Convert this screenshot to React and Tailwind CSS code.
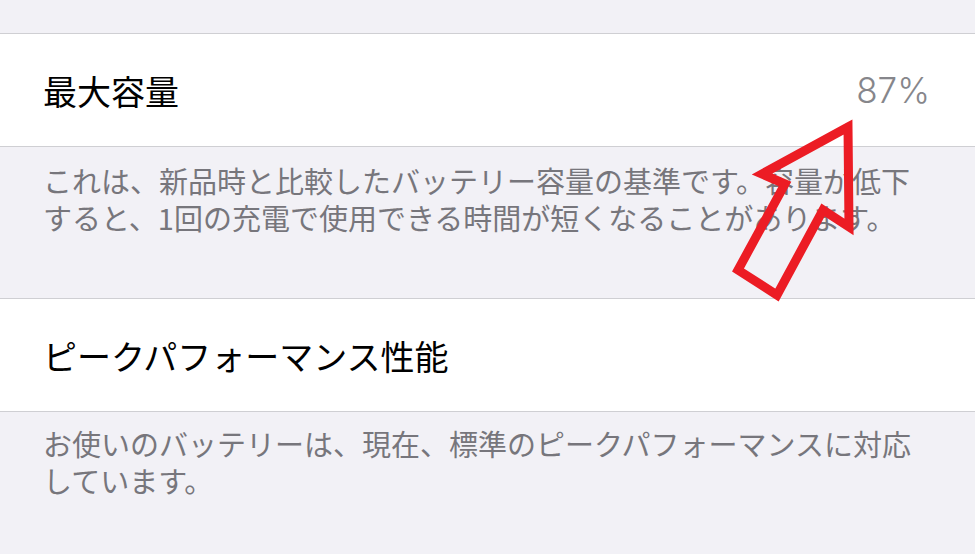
import React from 'react';

const jp = { fontFamily: '"Noto Sans CJK JP", "Noto Sans", sans-serif' };

function Row({ title, value }) {
  return (
    <div className="flex h-[112px] items-center justify-between bg-white pl-[43px] pr-[45px]">
      <span className="text-[34px] text-black" style={jp}>{title}</span>
      {value && (
        <span className="text-[35px] font-light text-[#86868b]" style={{ fontFamily: 'Inter, "Liberation Sans", sans-serif' }}>
          {value}
        </span>
      )}
    </div>
  );
}

function Note({ children, className }) {
  return (
    <div className={`px-[43px] text-[29px] leading-[37px] text-[#77767c] ${className}`} style={jp}>
      {children}
    </div>
  );
}

// 赤い矢印(注釈)
function Arrow() {
  return (
    <svg className="pointer-events-none absolute inset-0" width="975" height="554" viewBox="0 0 975 554">
      <polygon
        points="848,127 762,174 785,184 738,270 777,295 823,210 849,227"
        fill="none"
        stroke="#ec1c24"
        strokeWidth="9"
        strokeLinejoin="miter"
      />
    </svg>
  );
}

export default function App() {
  return (
    <div className="relative h-[554px] w-[975px] overflow-hidden bg-[#f2f1f6]">
      <div className="h-[33px]" />
      <div className="border-y border-[#cfcfd3]">
        <Row title="最大容量" value="87%" />
      </div>
      <Note className="h-[151px] pt-[15px]">
        これは、新品時と比較したバッテリー容量の基準です。容量が低下
        <br />
        すると、1回の充電で使用できる時間が短くなることがあります。
      </Note>
      <div className="border-y border-[#cfcfd3]">
        <Row title="ピークパフォーマンス性能" />
      </div>
      <Note className="pt-[13px]">
        お使いのバッテリーは、現在、標準のピークパフォーマンスに対応
        <br />
        しています。
      </Note>
      <Arrow />
    </div>
  );
}
